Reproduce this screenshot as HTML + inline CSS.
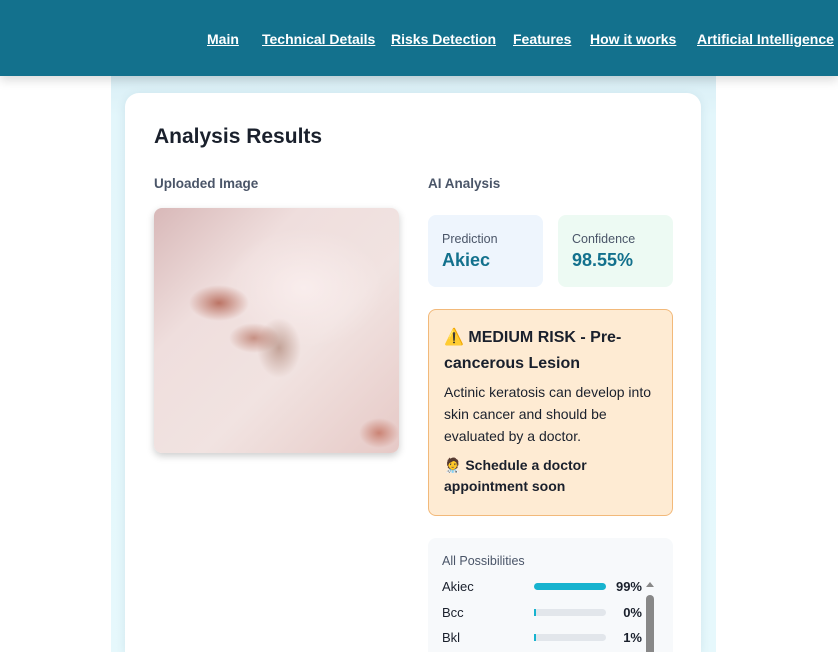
<!DOCTYPE html>
<html><head><meta charset="utf-8"><style>
*{margin:0;padding:0;box-sizing:border-box}
html,body{width:838px;height:652px;overflow:hidden}
body{background:#fff;font-family:"Liberation Sans","DejaVu Sans",sans-serif;position:relative}
.hdr{position:absolute;left:0;top:0;width:838px;height:76px;background:#13718d;box-shadow:0 4px 10px rgba(0,0,0,.15);z-index:2}
.hdr a{position:absolute;top:31px;color:#fff;font-weight:bold;font-size:14px;text-decoration:underline;white-space:nowrap}
.panel{position:absolute;left:111px;top:76px;width:605px;height:576px;background:linear-gradient(#d9eef5,#e3f6fb 40px,#e6f8fc)}
.card{position:absolute;left:125px;top:93px;width:576px;height:559px;background:#fff;border-radius:14px 14px 0 0;box-shadow:0 2px 10px rgba(0,80,110,.1)}
.abs{position:absolute}
h1{position:absolute;left:154px;top:125px;font-size:21px;color:#1a202c;font-weight:bold}
.lbl{font-size:13.5px;font-weight:bold;color:#4a5568}
.img{left:154px;top:208px;width:245px;height:245px;border-radius:8px;overflow:hidden;box-shadow:0 3px 8px rgba(0,0,0,.2);
background:
radial-gradient(ellipse 30px 18px at 65px 95px,rgba(170,80,60,.75),transparent),
radial-gradient(ellipse 25px 15px at 100px 130px,rgba(170,90,70,.6),transparent),
radial-gradient(ellipse 22px 30px at 125px 140px,rgba(150,100,80,.5),transparent),
radial-gradient(ellipse 20px 15px at 225px 225px,rgba(190,100,80,.7),transparent),
radial-gradient(ellipse 80px 60px at 150px 80px,rgba(255,245,245,.6),transparent),
linear-gradient(135deg,#d8b8b8,#efdedd 30%,#f1e3e1 60%,#e6c9c6)}
.box{border-radius:8px}
.pred{left:428px;top:215px;width:115px;height:72px;background:#eef5fd}
.conf{left:558px;top:215px;width:115px;height:72px;background:#edfaf3}
.small{position:absolute;left:14px;top:17px;font-size:12.5px;color:#4a5568}
.big{position:absolute;left:14px;top:35px;font-size:18px;font-weight:bold;color:#13718d}
.risk{left:428px;top:309px;width:245px;height:207px;background:#feebd3;border:1px solid #f2b97a;border-radius:8px;padding:15px 15px;color:#1a202c}
.risk .t{font-size:16px;font-weight:bold;line-height:26px}
.risk .d{font-size:14px;line-height:22px;margin-top:4px}
.risk .s{font-size:14px;font-weight:bold;line-height:21px;margin-top:8px}
.poss{left:428px;top:538px;width:245px;height:130px;background:#f7f9fb;border-radius:8px;overflow:hidden}
.row{position:absolute;left:14px;font-size:13px;color:#1a202c;width:200px}
.bar{position:absolute;left:92px;top:4px;width:72px;height:7px;background:#e2e6eb;border-radius:4px}
.pct{position:absolute;right:0;top:0;font-weight:bold}
</style></head><body>
<div class="hdr">
<a style="left:207px">Main</a>
<a style="left:262px">Technical Details</a>
<a style="left:391px">Risks Detection</a>
<a style="left:513px">Features</a>
<a style="left:590px">How it works</a>
<a style="left:697px">Artificial Intelligence</a>
</div>
<div class="panel"></div>
<div class="card"></div>
<h1>Analysis Results</h1>
<div class="abs lbl" style="left:154px;top:176px">Uploaded Image</div>
<div class="abs lbl" style="left:428px;top:176px">AI Analysis</div>
<div class="abs img"></div>
<div class="abs box pred"><div class="small">Prediction</div><div class="big">Akiec</div></div>
<div class="abs box conf"><div class="small">Confidence</div><div class="big">98.55%</div></div>
<div class="abs risk"><div class="t">⚠️ MEDIUM RISK - Pre-cancerous Lesion</div>
<div class="d">Actinic keratosis can develop into skin cancer and should be evaluated by a doctor.</div>
<div class="s">🧑‍⚕️ Schedule a doctor appointment soon</div></div>
<div class="abs poss">
<div class="small" style="top:16px">All Possibilities</div>
<div class="row" style="top:41px">Akiec<div class="bar" style="background:#17b3cf"></div><span class="pct">99%</span></div>
<div class="row" style="top:67px">Bcc<div class="bar"><div style="width:2px;height:7px;background:#17b3cf"></div></div><span class="pct">0%</span></div>
<div class="row" style="top:92px">Bkl<div class="bar"><div style="width:2px;height:7px;background:#17b3cf"></div></div><span class="pct">1%</span></div>
<div class="abs" style="left:218px;top:44px;width:0;height:0;border-left:4px solid transparent;border-right:4px solid transparent;border-bottom:5px solid #888"></div>
<div class="abs" style="left:218px;top:57px;width:8px;height:80px;background:#888;border-radius:4px"></div>
</div>
</body></html>
